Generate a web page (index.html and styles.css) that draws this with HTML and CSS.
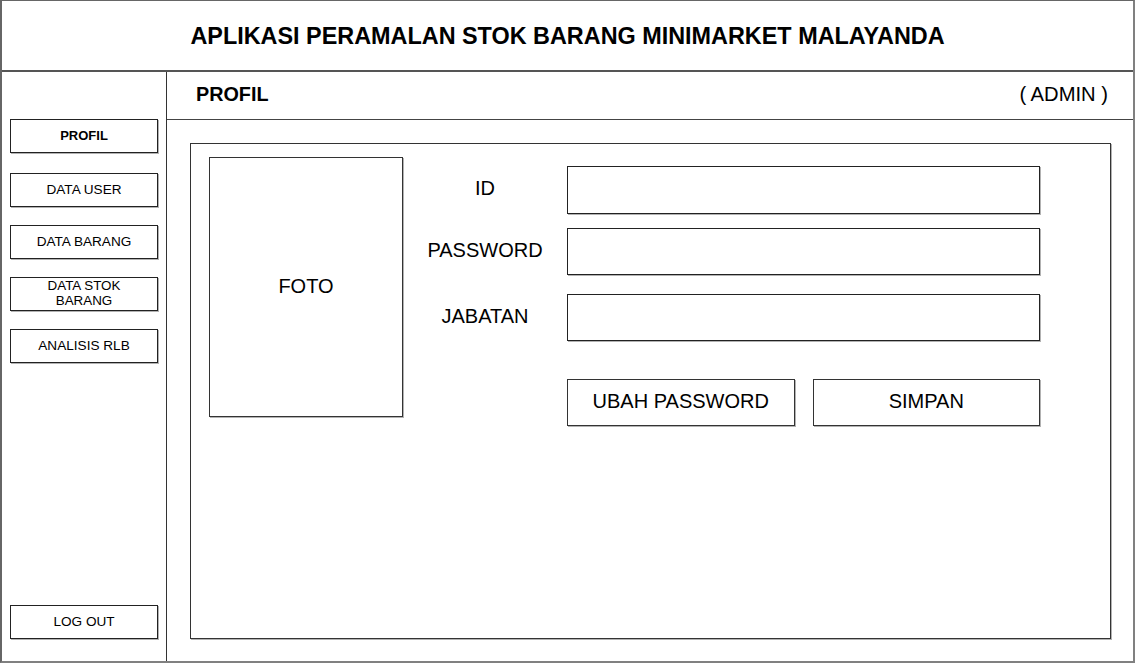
FILE: index.html
```html
<!DOCTYPE html>
<html lang="id">
<head>
<meta charset="utf-8">
<title>Aplikasi Peramalan Stok Barang</title>
<link rel="stylesheet" href="styles.css">
</head>
<body>
<div class="app">
  <header class="app-header">
    <h1 class="app-title">APLIKASI PERAMALAN STOK BARANG MINIMARKET MALAYANDA</h1>
  </header>
  <div class="app-body">
    <nav class="sidebar">
      <div class="nav-btn nav-active">PROFIL</div>
      <div class="nav-btn">DATA USER</div>
      <div class="nav-btn">DATA BARANG</div>
      <div class="nav-btn nav-two-line">DATA STOK<br>BARANG</div>
      <div class="nav-btn">ANALISIS RLB</div>
      <div class="nav-btn nav-logout">LOG OUT</div>
    </nav>
    <main class="main">
      <div class="page-header">
        <span class="page-title">PROFIL</span>
        <span class="page-role">( ADMIN )</span>
      </div>
      <section class="content-box">
        <div class="photo">FOTO</div>
        <div class="fields">
          <div class="field-row row-id">
            <div class="field-label">ID</div>
            <div class="field-input"></div>
          </div>
          <div class="field-row row-pass">
            <div class="field-label">PASSWORD</div>
            <div class="field-input"></div>
          </div>
          <div class="field-row row-jab">
            <div class="field-label">JABATAN</div>
            <div class="field-input"></div>
          </div>
          <div class="field-row row-actions">
            <div class="field-label"></div>
            <div class="actions">
              <div class="action-btn">UBAH PASSWORD</div>
              <div class="action-btn">SIMPAN</div>
            </div>
          </div>
        </div>
      </section>
    </main>
  </div>
</div>
</body>
</html>
```

FILE: styles.css
```css
* { box-sizing: border-box; }

html, body {
  margin: 0;
  padding: 0;
  background: #ffffff;
}

body {
  font-family: "Liberation Sans", Arial, sans-serif;
  color: #000;
}

.app {
  width: 1135px;
  height: 663px;
  display: flex;
  flex-direction: column;
  border-top: 1px solid #666;
  border-left: 2px solid #666;
  border-right: 2px solid #808080;
  border-bottom: 2px solid #808080;
  background: #fff;
}

.app-header {
  height: 71px;
  flex: none;
  border-bottom: 2px solid #555;
  display: flex;
  align-items: center;
  justify-content: center;
}

.app-title {
  margin: 0;
  padding-top: 1px;
  font-size: 23.4px;
  font-weight: bold;
}

.app-body {
  flex: 1;
  display: flex;
  min-height: 0;
}

.sidebar {
  width: 165px;
  flex: none;
  border-right: 1px solid #333;
  display: flex;
  flex-direction: column;
  padding: 47px 0 22px 8px;
}

.nav-btn {
  width: 148px;
  height: 34px;
  border: 1px solid #222;
  box-shadow: 1px 1px 0 rgba(0, 0, 0, 0.3);
  display: flex;
  align-items: center;
  justify-content: center;
  text-align: center;
  font-size: 13.6px;
  line-height: 15px;
  margin-bottom: 18px;
  padding-bottom: 2px;
}

.nav-active {
  font-weight: bold;
  font-size: 13px;
  margin-bottom: 20px;
}

.nav-two-line {
  line-height: 15px;
  font-size: 13.4px;
  padding-bottom: 2px;
}

.nav-logout {
  margin-top: auto;
  margin-bottom: 0;
}

.main {
  flex: 1;
  display: flex;
  flex-direction: column;
  min-width: 0;
}

.page-header {
  height: 48px;
  flex: none;
  border-bottom: 1px solid #444;
  display: flex;
  align-items: center;
  justify-content: space-between;
  padding: 0 25px 2px 29px;
}

.page-title {
  font-size: 19.8px;
  font-weight: bold;
}

.page-role {
  font-size: 20.2px;
}

.content-box {
  flex: 1;
  margin: 23px 22px 22px 23px;
  border: 1px solid #333;
  box-shadow: 1px 1px 0 rgba(0, 0, 0, 0.3);
  display: flex;
  align-items: flex-start;
}

.photo {
  width: 194px;
  height: 260px;
  margin: 13px 0 0 18px;
  border: 1px solid #333;
  box-shadow: 1px 1px 0 rgba(0, 0, 0, 0.3);
  display: flex;
  align-items: center;
  justify-content: center;
  font-size: 20px;
  padding-bottom: 2px;
}

.fields {
  margin-top: 22px;
  display: flex;
  flex-direction: column;
}

.field-row {
  display: flex;
  height: 47px;
}

.row-id { height: 48px; }
.row-pass { margin-top: 14px; }
.row-jab { margin-top: 19px; }
.row-actions { margin-top: 38px; }

.field-label {
  width: 164px;
  display: flex;
  align-items: center;
  justify-content: center;
  font-size: 20px;
  padding-bottom: 3px;
}

.field-input {
  width: 473px;
  height: 100%;
  border: 1px solid #222;
  box-shadow: 1px 1px 0 rgba(0, 0, 0, 0.3);
}

.actions {
  width: 473px;
  display: flex;
  gap: 18px;
}

.action-btn {
  flex: 1;
  height: 47px;
  border: 1px solid #333;
  box-shadow: 1px 1px 0 rgba(0, 0, 0, 0.3);
  display: flex;
  align-items: center;
  justify-content: center;
  font-size: 20px;
  padding-bottom: 2px;
}
```
